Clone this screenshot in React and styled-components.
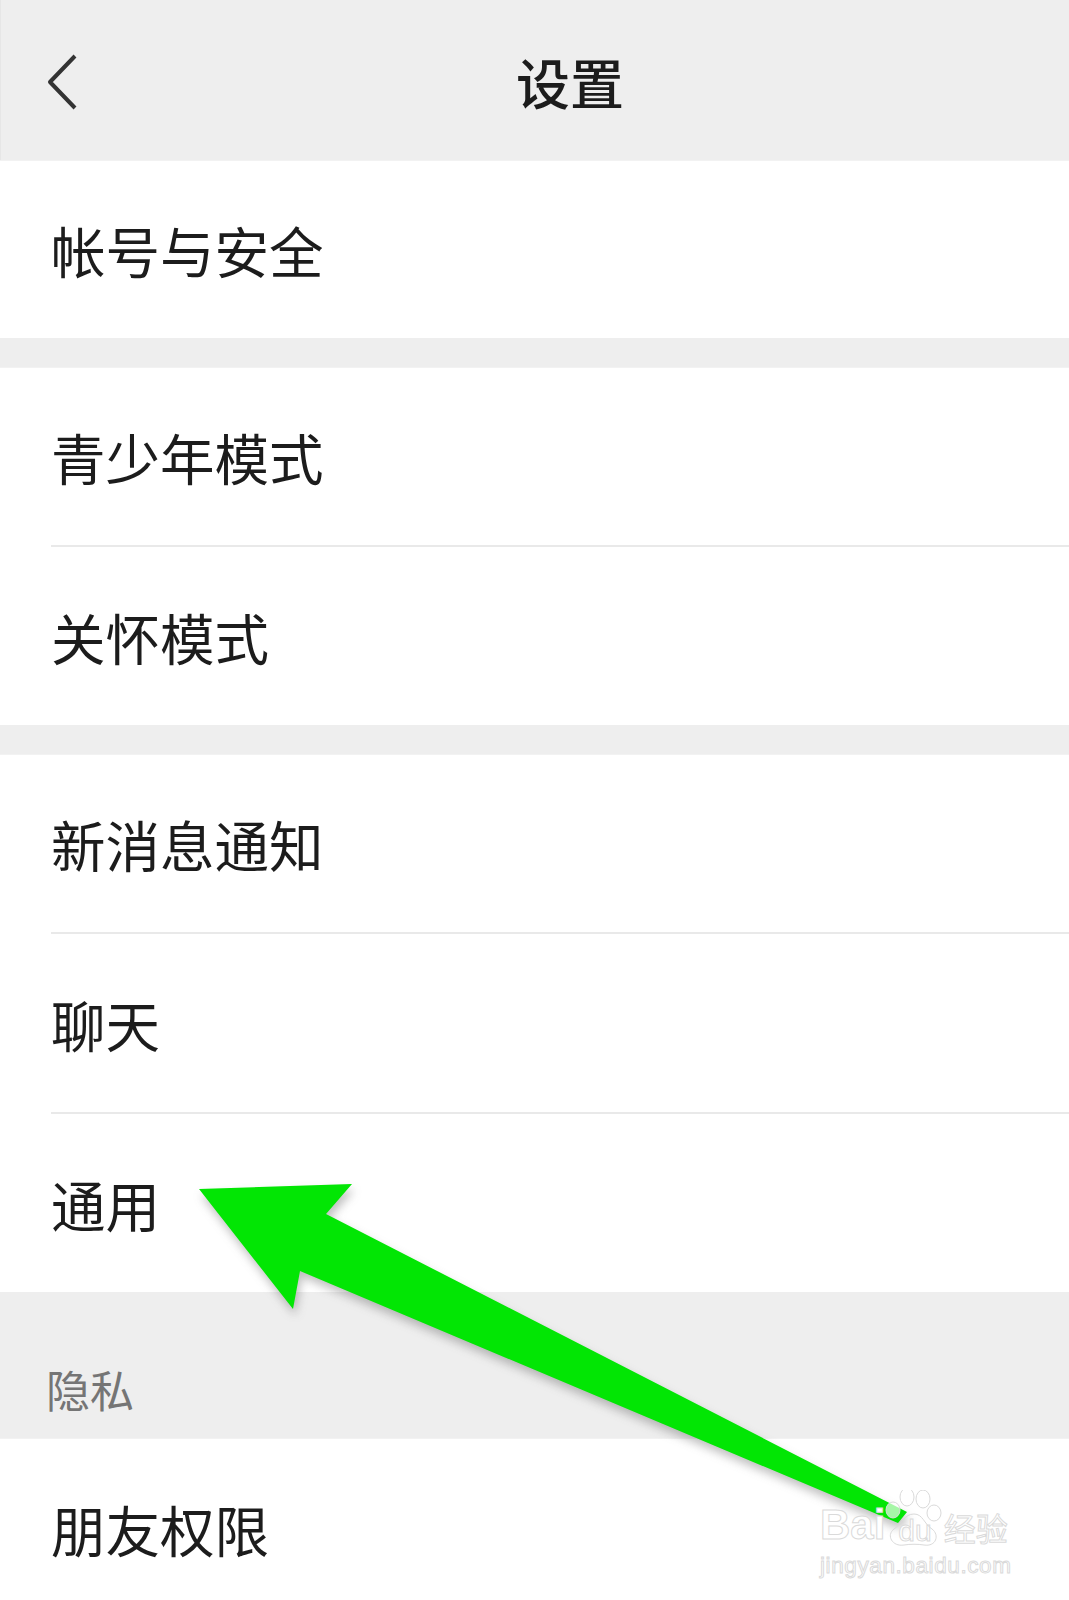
import React from 'react'
import styled, { createGlobalStyle } from 'styled-components'

const GlobalStyle = createGlobalStyle`
  html, body {
    margin: 0;
    padding: 0;
    background: #eeeeee;
  }
`

const Page = styled.div`
  position: relative;
  width: 1069px;
  height: 1600px;
  overflow: hidden;
  background: #eeeeee;
  font-family: "Noto Sans CJK SC", "Liberation Sans", sans-serif;
  color: #1c1c1c;
`

const Header = styled.header`
  display: flex;
  align-items: center;
  height: 160px;
  padding: 4px 0 0 46px;
  border-left: 1px solid #e6e6e6;
  box-sizing: border-box;
`

const Title = styled.h1`
  margin: 0 0 0 437px;
  font-size: 54px;
  line-height: 1;
  font-weight: 500;
`

const Group = styled.section`
  background: #ffffff;
  margin-bottom: ${p => p.$gap}px;
  border-top: 1px solid #f2f2f2;
`

const Row = styled.div`
  display: flex;
  align-items: center;
  height: ${p => p.$height || 177}px;
  padding: 2px 0 0 51px;
  box-sizing: border-box;
  font-size: 54.5px;
  line-height: 1;
`

const Divider = styled.div`
  height: 2px;
  margin-left: 51px;
  background: #e9e9e9;
`

const SectionLabel = styled.div`
  display: flex;
  align-items: flex-end;
  height: 146px;
  padding: 0 0 27px 46px;
  box-sizing: border-box;
  font-size: 44px;
  line-height: 1;
  color: #757575;
`

const ArrowLayer = styled.svg`
  position: absolute;
  left: 0;
  top: 0;
  width: 1069px;
  height: 1600px;
  filter: drop-shadow(2px 6px 5px rgba(70, 70, 70, 0.34));
`

const Watermark = styled.div`
  position: absolute;
  left: 820px;
  top: 1490px;
  width: 200px;
  display: flex;
  flex-direction: column;
  color: #ffffff;
  font-family: "Liberation Sans", "Noto Sans CJK SC", sans-serif;
`

const MarkRow = styled.div`
  display: flex;
  align-items: flex-end;
  height: 56px;
  margin-bottom: 9px;
`

const MarkText = styled.span`
  font-size: ${p => p.$size}px;
  line-height: 1;
  font-weight: ${p => p.$weight || 700};
  margin-left: ${p => p.$left || 0}px;
  letter-spacing: ${p => p.$spacing || 0}px;
  white-space: nowrap;
  -webkit-text-stroke: 1px #dadada;
`

const PawLayer = styled.svg`
  position: absolute;
  left: 0;
  top: 0;
  width: 200px;
  height: 70px;
`

const BackIcon = () => (
  <svg width="32" height="56" viewBox="0 0 32 56" fill="none">
    <path d="M28 2 L3 28 L28 54" stroke="#333333" strokeWidth="4" strokeLinejoin="round" />
  </svg>
)

const App = () => (
  <Page>
    <GlobalStyle />
    <Header>
      <BackIcon />
      <Title>设置</Title>
    </Header>
    <Group $gap={29}>
      <Row>帐号与安全</Row>
    </Group>
    <Group $gap={29}>
      <Row>青少年模式</Row>
      <Divider />
      <Row $height={178}>关怀模式</Row>
    </Group>
    <Group $gap={0}>
      <Row>新消息通知</Row>
      <Divider />
      <Row $height={178}>聊天</Row>
      <Divider />
      <Row $height={178}>通用</Row>
    </Group>
    <SectionLabel>隐私</SectionLabel>
    <Group $gap={0}>
      <Row $height={178}>朋友权限</Row>
    </Group>
    <ArrowLayer viewBox="0 0 1069 1600">
      <polygon
        points="199,1189 352,1184 326,1214 907,1512 898,1523 300,1271 293,1309"
        fill="#02e604"
      />
    </ArrowLayer>
    <Watermark>
      <MarkRow>
        <MarkText $size={42}>Bai</MarkText>
        <MarkText $size={30} $weight={400} $left={13}>du</MarkText>
        <MarkText $size={32} $weight={400} $left={12}>经验</MarkText>
      </MarkRow>
      <MarkText $size={22.5} $weight={400} $spacing={0.6}>jingyan.baidu.com</MarkText>
      <PawLayer viewBox="0 0 200 70">
        <g fill="#ffffff" fillOpacity="0.65" stroke="#dadada" strokeWidth="1">
          <ellipse cx="73" cy="20" rx="7" ry="8" />
          <ellipse cx="87" cy="7" rx="7" ry="9" />
          <ellipse cx="103" cy="9" rx="7" ry="9" />
          <ellipse cx="114" cy="23" rx="7" ry="8" />
          <path d="M94 24 C84 24 82 34 74 39 C66 45 72 57 84 55 C90 54 98 54 104 55 C116 57 120 45 112 39 C104 34 103 24 94 24 Z" fill="none" />
        </g>
      </PawLayer>
    </Watermark>
  </Page>
)

export default App
